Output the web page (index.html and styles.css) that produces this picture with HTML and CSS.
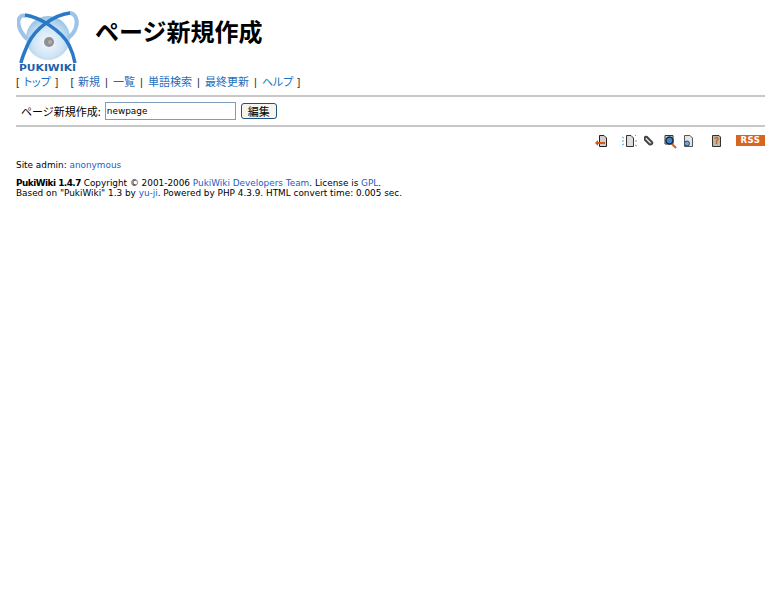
FILE: index.html
```html
<!DOCTYPE html>
<html>

<head>
    <title>ページ新規作成</title>
    <link rel="stylesheet" href="styles.css">
</head>

<body>
    <div class="header">
        <svg class="logo" width="64" height="62" viewBox="0 0 64 62">
            <defs>
                <radialGradient id="ball" cx="0.5" cy="0.6" r="0.62">
                    <stop offset="0" stop-color="#f4f9fd" />
                    <stop offset="0.55" stop-color="#cfe4f5" />
                    <stop offset="1" stop-color="#8fbfe3" />
                </radialGradient>
            </defs>
            <circle cx="31" cy="28" r="22" fill="url(#ball)" />
            <circle cx="32" cy="32" r="5" fill="#8f8f96" />
            <circle cx="33" cy="32" r="2" fill="#b9a9a0" />
            <path d="M9 6C3 4 0 10 2 16C3 21 6 25 10 29" fill="none" stroke="#9cc4e8" stroke-width="4" />
            <path d="M52 3C59 3 61 11 59 17C58 21 55 25 51 28" fill="none" stroke="#9cc4e8" stroke-width="4" />
            <path d="M8 5C22 7 44 20 52 35C55 41 57 47 58 53" fill="none" stroke="#2b79c6" stroke-width="3.5" />
            <path d="M53 3C36 5 18 19 11 34C8 41 5 47 4 53" fill="none" stroke="#2b79c6" stroke-width="3.5" />
            <text class="logo-text" x="2" y="61" textLength="57" lengthAdjust="spacingAndGlyphs">PUKIWIKI</text>
        </svg>
        <h1 class="title">ページ新規作成</h1>
    </div>

    <div class="navi">
        <div class="navi-group">
            <span>[</span><a class="kana" href="#">トップ</a><span>]</span>
        </div>
        <div class="navi-group">
            <span>[</span><a href="#">新規</a>
            <span class="sep">|</span><a href="#">一覧</a>
            <span class="sep">|</span><a href="#">単語検索</a>
            <span class="sep">|</span><a href="#">最終更新</a>
            <span class="sep">|</span><a class="help" href="#">ヘルプ</a><span>]</span>
        </div>
    </div>
    <hr class="rule">

    <form class="newpage">
        <label for="page">ページ新規作成:</label>
        <input type="text" id="page" class="page-input" value="newpage">
        <button type="button" class="edit-btn">編集</button>
    </form>
    <hr class="rule">

    <div class="toolbar">
        <svg class="tool tool-back" width="12" height="13" viewBox="0 0 12 13">
            <path d="M4.5 .5H9L11.5 3V11.5H4.5Z" fill="#cfcfcf" stroke="#222" />
            <path d="M2 8H10" stroke="#d8551a" stroke-width="2" />
            <path d="M3 5V11L0 8Z" fill="#d8551a" />
        </svg>
        <svg class="tool tool-new" width="15" height="13" viewBox="0 0 15 13">
            <path d="M4.5 .5H9L11.5 3V11.5H4.5Z" fill="#dcdcdc" stroke="#333" />
            <path d="M0 2L2 3M0 6H2M0 10L2 9M13 1L14 0M13 6H15M13 10L15 11" stroke="#4aa3df" />
        </svg>
        <svg class="tool tool-clip" width="10" height="12" viewBox="0 0 10 12">
            <path d="M3 2L8 7C9 9 7 10 5 9L1 5C0 3 1 1 3 2Z" fill="#e4e4e4" stroke="#444" stroke-width="2" />
        </svg>
        <svg class="tool tool-search" width="13" height="14" viewBox="0 0 13 14">
            <path d="M1 .5H9V9H1Z" fill="#ddd" stroke="#333" />
            <circle cx="5.5" cy="5.5" r="3.5" fill="#3f86c8" stroke="#1a2a44" stroke-width="1.5" />
            <path d="M8 9L12 13" stroke="#c8651e" stroke-width="2" />
        </svg>
        <svg class="tool tool-backup" width="10" height="13" viewBox="0 0 10 13">
            <path d="M1.5 .5H7L9.5 3V11.5H1.5Z" fill="#e4e4e4" stroke="#555" />
            <circle cx="4" cy="8.5" r="2.5" fill="#6ea6d8" stroke="#345" />
        </svg>
        <svg class="tool tool-help" width="9" height="13" viewBox="0 0 9 13">
            <path d="M.5 .5H7L8.5 2V11.5H.5Z" fill="#bdb7aa" stroke="#333" />
            <path d="M3 4C3 2 6 2 6 4L4.5 6V9" fill="none" stroke="#d2691e" stroke-width="1.5" />
        </svg>
        <span class="rss">RSS</span>
    </div>

    <div class="admin">Site admin: <a href="#">anonymous</a></div>

    <div class="footer">
        <strong class="version">PukiWiki 1.4.7</strong> Copyright &copy; 2001-2006 <a href="#">PukiWiki Developers Team</a>. License is <a href="#">GPL</a>.<br>
        Based on "PukiWiki" 1.3 by <a href="#">yu-ji</a>. Powered by PHP 4.3.9. HTML convert time: 0.005 sec.
    </div>
</body>

</html>
```

FILE: styles.css
```css
body {
    margin: 0;
    padding: 10px 15px 0 16px;
    background-color: #fff;
    color: #000;
    font-family: "DejaVu Sans", Verdana, sans-serif;
    font-size: 8.9px;
}

a {
    color: #215dc6;
    text-decoration: none;
}

.header {
    display: flex;
    height: 62px;
}

.logo {
    display: block;
    margin-left: 1px;
}

.logo-text {
    font-family: "DejaVu Sans", sans-serif;
    font-size: 9px;
    font-weight: bold;
    fill: #1c63ab;
}

.title {
    margin: 6px 0 0 14px;
    font-family: "Noto Sans CJK JP", sans-serif;
    font-size: 24px;
    line-height: 30px;
    font-weight: bold;
}

.navi {
    display: flex;
    gap: 12px;
    margin-top: 2px;
    font-family: "Liberation Sans", "Noto Sans CJK JP", sans-serif;
    font-size: 11px;
    line-height: 16px;
    color: #333;
}

.navi a {
    color: #1a6fc0;
}

.navi-group {
    display: flex;
    gap: 4.5px;
}

.sep {
    width: 4px;
    text-align: center;
}

.kana {
    font-feature-settings: "palt";
}

.help {
    letter-spacing: -0.7px;
}

.rule {
    height: 2px;
    margin: 5px 0 0;
    border: 0;
    background-color: #c8c8c8;
}

.newpage {
    display: flex;
    align-items: center;
    gap: 4px;
    height: 28px;
    margin: 0;
    padding-left: 5px;
    font-family: "Noto Sans CJK JP", sans-serif;
    font-size: 11px;
}

.newpage+.rule {
    margin-top: 0;
}

.page-input {
    box-sizing: border-box;
    width: 131px;
    height: 18px;
    margin: 0;
    padding: 0 1px;
    border: 1px solid #7f9db9;
    font-family: "DejaVu Sans", sans-serif;
    font-size: 8.9px;
}

.edit-btn {
    box-sizing: border-box;
    width: 36px;
    height: 16px;
    margin-left: 1px;
    padding: 0;
    border: 1px solid #1c5180;
    border-radius: 3px;
    background-color: #f5f5ee;
    font-family: "Noto Sans CJK JP", sans-serif;
    font-size: 11px;
    line-height: 14px;
}

.toolbar {
    display: flex;
    align-items: flex-start;
    height: 13px;
    margin-top: 8px;
    padding-left: 579px;
}

.tool-new {
    margin-left: 15px;
}

.tool-clip {
    margin-left: 7px;
}

.tool-search {
    margin-left: 10px;
}

.tool-backup {
    margin-left: 6px;
}

.tool-help {
    margin-left: 19px;
}

.rss {
    box-sizing: border-box;
    width: 29px;
    height: 11px;
    margin-left: 15px;
    background-color: #d9661f;
    color: #fff;
    font-family: "DejaVu Sans", sans-serif;
    font-size: 8.5px;
    font-weight: bold;
    line-height: 11px;
    text-align: center;
    letter-spacing: 0.5px;
}

.admin {
    margin-top: 12px;
    line-height: 11px;
}

.footer {
    margin-top: 7px;
    line-height: 10px;
}

.version {
    letter-spacing: -0.5px;
}
```
